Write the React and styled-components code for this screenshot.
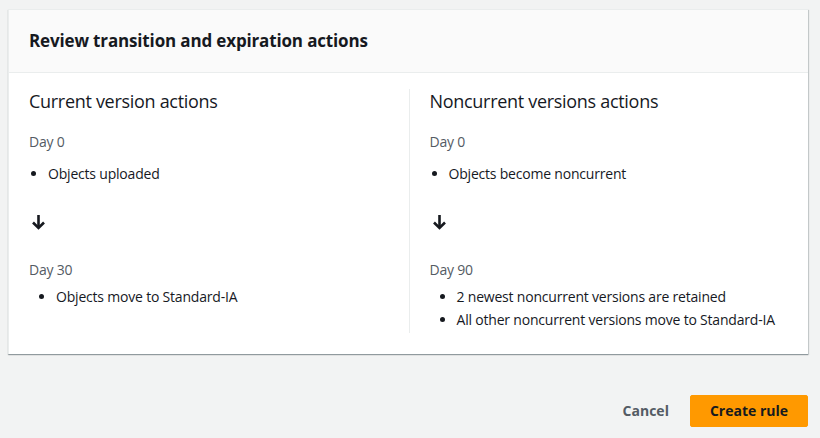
import styled, { createGlobalStyle } from 'styled-components';

const GlobalStyle = createGlobalStyle`
  body {
    margin: 0;
    background: #f2f3f3;
    font-family: "Open Sans", "Noto Sans", sans-serif;
    color: #16191f;
  }
`;

const Page = styled.div`
  padding: 9px 12px 0 8px;
`;

const Card = styled.section`
  background: #ffffff;
  border-top: 1px solid #eaeded;
  border-left: 1px solid #eaeded;
  box-shadow: 0 1px 1px 0 rgba(0, 28, 36, 0.3), 1px 1px 1px 0 rgba(0, 28, 36, 0.15);
`;

const Header = styled.div`
  background: #fafafa;
  border-bottom: 1px solid #eaeded;
  padding: 20px 20px 20px;
`;

const Title = styled.h2`
  margin: 0;
  font-size: 17px;
  line-height: 22px;
  font-weight: 700;
  letter-spacing: -0.15px;
`;

const Body = styled.div`
  display: grid;
  grid-template-columns: 1fr 1fr;
  padding: 16px 20px 21px;
`;

const Column = styled.div`
  padding: ${p => (p.$divided ? '0 0 3px 20px' : '0 20px 3px 0')};
  border-left: ${p => (p.$divided ? '1px solid #eaeded' : 'none')};
`;

const ColumnTitle = styled.h3`
  margin: 0;
  font-size: 18px;
  line-height: 24px;
  font-weight: 400;
  letter-spacing: -0.3px;
`;

const Day = styled.div`
  font-size: 14px;
  line-height: 20px;
  color: #545b64;
  letter-spacing: -0.2px;
  margin-top: ${p => p.$top}px;
`;

const List = styled.ul`
  margin: ${p => p.$top}px 0 0;
  padding-left: ${p => p.$indent}px;
  font-size: 14px;
  line-height: 20px;
  letter-spacing: -0.2px;
`;

const Item = styled.li`
  & + & {
    margin-top: 3px;
  }
`;

const Arrow = styled.svg`
  display: block;
  margin: 30px 0 0 2px;
`;

const Actions = styled.div`
  display: flex;
  justify-content: flex-end;
  align-items: center;
  gap: 21px;
  margin-top: 41px;
`;

const Button = styled.button`
  font-family: inherit;
  font-size: 14px;
  font-weight: 700;
  line-height: 20px;
  border-radius: 2px;
  cursor: pointer;
  height: 32px;
  padding: 0 ${p => (p.$primary ? '19px' : '0')};
  border: ${p => (p.$primary ? '1px solid #ff9900' : 'none')};
  background: ${p => (p.$primary ? '#ff9900' : 'transparent')};
  color: ${p => (p.$primary ? '#16191f' : '#545b64')};
`;

const DownArrow = () => (
  <Arrow width="15" height="16" viewBox="0 0 15 16" fill="none" stroke="#16191f" strokeWidth="2.6">
    <path d="M7.5 1v13" />
    <path d="M2 8.5l5.5 5.5 5.5-5.5" />
  </Arrow>
);

const VersionColumn = ({ title, first, next, divided }) => (
  <Column $divided={divided}>
    <ColumnTitle>{title}</ColumnTitle>
    <Day $top={19}>Day {first.day}</Day>
    <List $top={12} $indent={19}>
      {first.items.map(text => <Item key={text}>{text}</Item>)}
    </List>
    <DownArrow />
    <Day $top={30}>Day {next.day}</Day>
    <List $top={7} $indent={27}>
      {next.items.map(text => <Item key={text}>{text}</Item>)}
    </List>
  </Column>
);

export default function App() {
  return (
    <Page>
      <GlobalStyle />
      <Card>
        <Header>
          <Title>Review transition and expiration actions</Title>
        </Header>
        <Body>
          <VersionColumn
            title="Current version actions"
            first={{ day: 0, items: ['Objects uploaded'] }}
            next={{ day: 30, items: ['Objects move to Standard-IA'] }}
          />
          <VersionColumn
            divided
            title="Noncurrent versions actions"
            first={{ day: 0, items: ['Objects become noncurrent'] }}
            next={{
              day: 90,
              items: [
                '2 newest noncurrent versions are retained',
                'All other noncurrent versions move to Standard-IA',
              ],
            }}
          />
        </Body>
      </Card>
      <Actions>
        <Button>Cancel</Button>
        <Button $primary>Create rule</Button>
      </Actions>
    </Page>
  );
}
